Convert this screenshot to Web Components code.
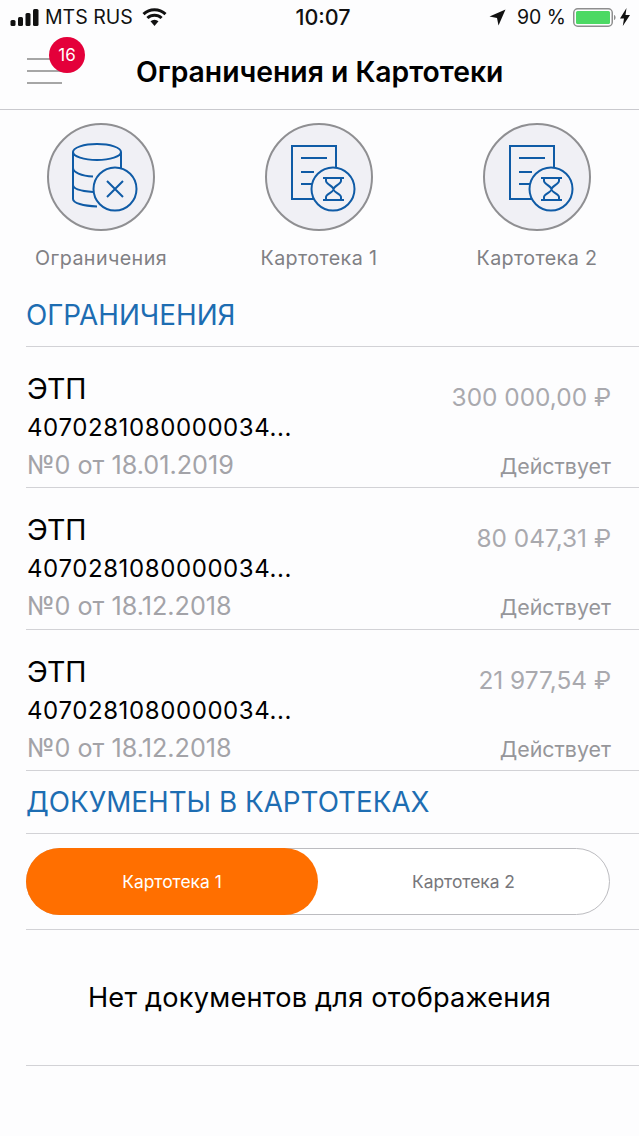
<!DOCTYPE html>
<html lang="ru">
<head>
<meta charset="utf-8">
<title>Ограничения и Картотеки</title>
<style>
  html, body { margin: 0; padding: 0; background: #fdfdfe; }
  body { width: 639px; height: 1136px; overflow: hidden; font-family: Inter, "Noto Sans", sans-serif; }
</style>
</head>
<body>
<app-screen>
  <status-bar></status-bar>
  <nav-bar badge="16">Ограничения и Картотеки</nav-bar>
  <shortcut-row>
    <shortcut-item icon="db" label="Ограничения"></shortcut-item>
    <shortcut-item icon="doc" label="Картотека 1"></shortcut-item>
    <shortcut-item icon="doc" label="Картотека 2"></shortcut-item>
  </shortcut-row>
  <section-title top="14">ОГРАНИЧЕНИЯ</section-title>
  <limit-row account="4070281080000034..." doc="№0 от 18.01.2019" amount="300 000,00 ₽"></limit-row>
  <limit-row account="4070281080000034..." doc="№0 от 18.12.2018" amount="80 047,31 ₽"></limit-row>
  <limit-row account="4070281080000034..." doc="№0 от 18.12.2018" amount="21 977,54 ₽"></limit-row>
  <section-title top="0">ДОКУМЕНТЫ В КАРТОТЕКАХ</section-title>
  <seg-toggle first="Картотека 1" second="Картотека 2"></seg-toggle>
  <empty-note>Нет документов для отображения</empty-note>
</app-screen>

<script>
class AppScreen extends HTMLElement {
  constructor() {
    super();
    this.attachShadow({ mode: 'open' });
    this.shadowRoot.innerHTML = `
      <style>:host { display: flex; flex-direction: column; width: 639px; color: #000; }</style>
      <slot></slot>`;
  }
}

class StatusBar extends HTMLElement {
  constructor() {
    super();
    this.attachShadow({ mode: 'open' });
    this.shadowRoot.innerHTML = `
      <style>
        :host { display: grid; grid-template-columns: 1fr auto 1fr; align-items: center; height: 36px; font-size: 19.500px; color: #111; box-sizing: border-box; padding: 0 9px 2px 10px; }
        .left, .right { display: flex; align-items: center; }
        .right { justify-content: flex-end; }
        .time { font-weight: 500; font-size: 21.500px; margin-left: 6px; }
        .carrier { margin-left: 6px; }
        .wifi { margin-left: 9px; }
        .pct { margin: 0 7px 0 11px; }
        svg { display: block; }
      </style>
      <div class="left">
        <svg width="29" height="17" viewBox="0 0 29 17"><rect x="0.500" y="11" width="5" height="6" rx="1.500" fill="#111"/><rect x="8" y="8" width="5" height="9" rx="1.500" fill="#111"/><rect x="15.500" y="4" width="5" height="13" rx="1.500" fill="#111"/><rect x="23" y="0" width="5.500" height="17" rx="1.500" fill="#111"/></svg>
        <span class="carrier">MTS RUS</span>
        <svg class="wifi" width="25" height="18" viewBox="0 0 25 18"><path d="M1.500 6.200a16 16 0 0 1 22 0" fill="none" stroke="#111" stroke-width="3"/><path d="M5.400 10a10.400 10.400 0 0 1 14.200 0" fill="none" stroke="#111" stroke-width="3"/><path d="M8.500 13.200 12.500 18l4-4.800a6 6 0 0 0-8 0z" fill="#111"/></svg>
      </div>
      <div class="time">10:07</div>
      <div class="right">
        <svg width="17" height="17" viewBox="0 0 17 17"><path d="M16.500 .5 9.500 16.500 8 9 .5 7.500z" fill="#111"/></svg>
        <span class="pct">90 %</span>
        <svg width="43" height="19" viewBox="0 0 43 19"><rect x="0.750" y="0.750" width="38.500" height="17.500" rx="4" fill="none" stroke="#8e8e8e" stroke-width="1.500"/><rect x="3" y="3" width="34" height="13" rx="1.500" fill="#4cd964"/><path d="M41 7v5c1-.3 1.600-1.300 1.600-2.500S42 7.300 41 7z" fill="#8e8e8e"/></svg>
        <svg style="margin-left:4px" width="10" height="18" viewBox="0 0 10 18"><path d="M6.500 0 0 10.500h4L2.800 18 10 7H5.500z" fill="#111"/></svg>
      </div>`;
  }
}

class NavBar extends HTMLElement {
  constructor() {
    super();
    this.attachShadow({ mode: 'open' });
    this.shadowRoot.innerHTML = `
      <style>
        :host { display: flex; position: relative; align-items: center; height: 73px; border-bottom: 1px solid #c9c9ce; box-sizing: content-box; }
        .menu { display: flex; flex-direction: column; gap: 10px; margin: 0 0 0 27px; width: 35px; padding-bottom: 3px; }
        .menu i { display: block; height: 2px; background: #a6a6a6; }
        .badge { position: absolute; left: 49px; top: 1px; width: 36px; height: 36px; border-radius: 50%; background: #e4003a; color: #fff; font-size: 17px; display: flex; align-items: center; justify-content: center; }
        .title { flex: 1; margin: 0 0 2px 74px; font-size: 28.300px; font-weight: 600; white-space: nowrap; }
      </style>
      <div class="menu"><i></i><i></i><i></i></div>
      <div class="badge">${this.getAttribute('badge')}</div>
      <div class="title"><slot></slot></div>`;
  }
}

class ShortcutRow extends HTMLElement {
  constructor() {
    super();
    this.attachShadow({ mode: 'open' });
    this.shadowRoot.innerHTML = `
      <style>:host { display: flex; justify-content: space-between; padding: 13px 48px 0 47px; }</style>
      <slot></slot>`;
  }
}

const SHORTCUT_ICONS = {
  db: `<g fill="none" stroke="#0f5ba6" stroke-width="2">
      <ellipse cx="50" cy="29" rx="24" ry="8"/>
      <path d="M26 29v47c0 4 10 7 24 7.500M74 29v26"/>
      <path d="M26 45c0 4 8 8 20 8.500M26 62c0 4 7 6 20 7"/>
      <circle cx="68" cy="66" r="21.500" fill="#f0f0f5"/>
      <path d="M60 58l16 16M76 58 60 74"/>
    </g>`,
  doc: `<g fill="none" stroke="#0f5ba6" stroke-width="2">
      <path d="M50 76H27V23h44v25"/>
      <path d="M36 35h26M36 49h13M36 61h11"/>
      <circle cx="68" cy="66" r="21.500" fill="#f0f0f5"/>
      <path d="M58 55h21M58 77h21M61 55v3c0 3 7 5 7.500 8s-7.500 5-7.500 8v3M76 55v3c0 3-7 5-7.500 8s7.500 5 7.500 8v3" stroke-linejoin="round"/>
    </g>`
};

class ShortcutItem extends HTMLElement {
  constructor() {
    super();
    this.attachShadow({ mode: 'open' });
    this.shadowRoot.innerHTML = `
      <style>
        :host { display: flex; flex-direction: column; align-items: center; width: 108px; }
        .circle { width: 108px; height: 108px; border-radius: 50%; background: #f0f0f5; border: 2px solid #8f8f92; box-sizing: border-box; flex: none; position: relative; }
        svg { position: absolute; left: -2px; top: -2px; }
        .label { margin-top: 15px; font-size: 19.700px; line-height: 24px; color: #808084; white-space: nowrap; letter-spacing: .4px; }
      </style>
      <div class="circle"><svg width="108" height="108" viewBox="0 0 108 108">${SHORTCUT_ICONS[this.getAttribute('icon')]}</svg></div>
      <div class="label">${this.getAttribute('label')}</div>`;
  }
}

class SectionTitle extends HTMLElement {
  constructor() {
    super();
    this.attachShadow({ mode: 'open' });
    this.shadowRoot.innerHTML = `
      <style>
        :host { display: flex; align-items: center; margin-left: 26px; padding-top: ${this.getAttribute('top')}px; height: 62px; box-sizing: content-box; font-size: 27.800px; color: #1d6db2; border-bottom: 1px solid #d2d2d6; }
      </style>
      <slot></slot>`;
  }
}

class LimitRow extends HTMLElement {
  constructor() {
    super();
    this.attachShadow({ mode: 'open' });
    this.shadowRoot.innerHTML = `
      <style>
        :host { display: flex; justify-content: space-between; margin-left: 26px; height: 140.340px; padding: 0 28px 0 1px; border-bottom: 1px solid #d2d2d6; box-sizing: content-box; }
        .col { display: flex; flex-direction: column; }
        .right { align-items: flex-end; }
        .name { font-size: 28.500px; line-height: 32px; margin-top: 26px; }
        .acc { font-size: 24px; line-height: 32px; margin-top: 7px; letter-spacing: .6px; white-space: nowrap; }
        .doc { font-size: 25.200px; line-height: 32px; margin-top: 5px; color: #a3a3a8; }
        .amount { font-size: 24.400px; line-height: 32px; margin-top: 34px; color: #a9a9ae; }
        .state { font-size: 21.400px; line-height: 26px; margin-top: 40px; color: #96969a; }
      </style>
      <div class="col">
        <div class="name">ЭТП</div>
        <div class="acc">${this.getAttribute('account')}</div>
        <div class="doc">${this.getAttribute('doc')}</div>
      </div>
      <div class="col right">
        <div class="amount">${this.getAttribute('amount')}</div>
        <div class="state">Действует</div>
      </div>`;
  }
}

class SegToggle extends HTMLElement {
  constructor() {
    super();
    this.attachShadow({ mode: 'open' });
    this.shadowRoot.innerHTML = `
      <style>
        :host { display: block; margin-left: 26px; padding: 14px 29px 14px 0; border-bottom: 1px solid #d2d2d6; }
        .track { display: grid; grid-template-columns: 291px 1fr; height: 67px; border: 1px solid #bcbcc0; border-radius: 34px; box-sizing: border-box; background: #fff; }
        .seg { display: flex; align-items: center; justify-content: center; font-size: 17.400px; color: #77777b; border-radius: 34px; }
        .on { background: #ff6f00; color: #fff; margin: -1px 0 -1px -1px; }
      </style>
      <div class="track">
        <div class="seg on">${this.getAttribute('first')}</div>
        <div class="seg">${this.getAttribute('second')}</div>
      </div>`;
  }
}

class EmptyNote extends HTMLElement {
  constructor() {
    super();
    this.attachShadow({ mode: 'open' });
    this.shadowRoot.innerHTML = `
      <style>
        :host { display: flex; align-items: center; justify-content: center; margin-left: 26px; height: 135px; font-size: 27.200px; letter-spacing: .2px; border-bottom: 1px solid #d2d2d6; padding-right: 26px; box-sizing: content-box; }
      </style>
      <slot></slot>`;
  }
}

customElements.define('app-screen', AppScreen);
customElements.define('status-bar', StatusBar);
customElements.define('nav-bar', NavBar);
customElements.define('shortcut-row', ShortcutRow);
customElements.define('shortcut-item', ShortcutItem);
customElements.define('section-title', SectionTitle);
customElements.define('limit-row', LimitRow);
customElements.define('seg-toggle', SegToggle);
customElements.define('empty-note', EmptyNote);
</script>
</body>
</html>
